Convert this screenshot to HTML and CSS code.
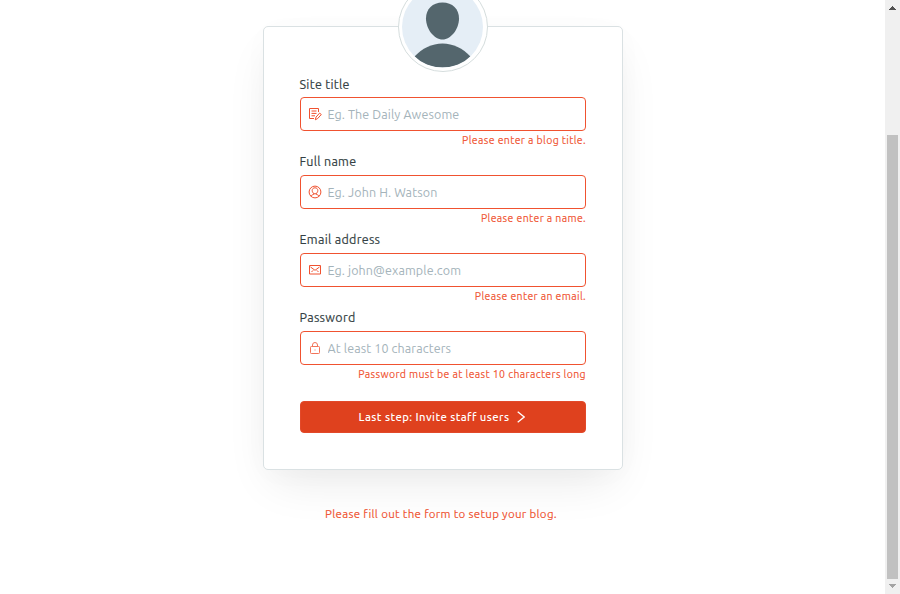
FILE: index.html
```html
<!DOCTYPE html>
<html lang="en">
<head>
<meta charset="utf-8">
<title>Setup</title>
<link rel="stylesheet" href="styles.css">
</head>
<body>
<main class="page">
  <form class="card">
    <div class="avatar">
      <svg viewBox="0 0 90 90" width="90" height="90">
        <circle cx="45" cy="45" r="44.5" fill="#fff" stroke="#d5dddd"/>
        <clipPath id="disc"><circle cx="44.5" cy="45" r="40.5"/></clipPath>
        <g clip-path="url(#disc)">
          <path fill="#e5eef6" d="M0 0h90v90H0z"/>
          <path fill="#54666d" d="M44.500 20.500C54.500 20.500 61 27 61 36.500C61 47 53 57.500 44.500 57.500S28 47 28 36.500C28 27 34.500 20.500 44.500 20.500z"/>
          <path fill="#54666d" d="M16.500 74.500C24 66.500 34 61.500 44.500 61.500S65 66.500 72.500 74.500C66 82 56 85.500 44.500 85.500S23 82 16.500 74.500z"/>
        </g>
      </svg>
    </div>
    <div class="group">
      <label class="label first" for="title">Site title</label>
      <div class="field">
        <svg class="icon" viewBox="0 0 14 14"><path d="M10.500 5V1.500H1.500V11.500H6M3.500 4h5M3.500 6.400h5M3.500 8.800h3.500M7.300 12.800l.7-2.700 3.600-4 1.700 1.400-3.600 4z"/></svg>
        <input class="input" id="title" type="text" placeholder="Eg. The Daily Awesome">
      </div>
      <p class="error">Please enter a blog title.</p>
    </div>
    <div class="group">
      <label class="label" for="name">Full name</label>
      <div class="field">
        <svg class="icon" viewBox="0 0 14 14"><circle cx="7" cy="7" r="5.900"/><path d="M7 2.800c1.800 0 2.800 1.100 2.800 2.700S8.700 8.900 7 8.900 4.200 7.100 4.200 5.500 5.200 2.800 7 2.800zM3 11.300c.3-1.200 1.400-1.500 2.700-1.900V8.500M11 11.300c-.3-1.200-1.400-1.500-2.700-1.900V8.500"/></svg>
        <input class="input" id="name" type="text" placeholder="Eg. John H. Watson">
      </div>
      <p class="error">Please enter a name.</p>
    </div>
    <div class="group">
      <label class="label" for="email">Email address</label>
      <div class="field">
        <svg class="icon" viewBox="0 0 14 14"><path d="M1.500 2.500h11v8.500h-11zM2.500 4L7 7.300 11.500 4M3.500 9l1.700-1.700M10.500 9L8.800 7.300"/></svg>
        <input class="input" id="email" type="text" placeholder="Eg. john@example.com">
      </div>
      <p class="error">Please enter an email.</p>
    </div>
    <div class="group">
      <label class="label" for="password">Password</label>
      <div class="field">
        <svg class="icon light" viewBox="0 0 14 14"><rect x="2.500" y="5.500" width="9" height="7" rx=".8"/><path d="M4.500 5.500V4a2.500 2.500 0 0 1 5 0v1.500M7 8.500v1"/></svg>
        <input class="input" id="password" type="password" placeholder="At least 10 characters">
      </div>
      <p class="error">Password must be at least 10 characters long</p>
    </div>
    <button class="button" type="button">
      <span class="button-text">Last step: Invite staff users</span>
      <svg class="chevron" viewBox="0 0 8 12"><path d="M.7.700L7.200 6 .7 11.300"/></svg>
    </button>
  </form>
  <p class="notice">Please fill out the form to setup your blog.</p>
</main>
<aside class="scrollbar">
  <svg class="arrow" viewBox="0 0 7 4"><path fill="#505050" d="M3 0h1v1h1v1h1v1h1v1H0V3h1V2h1V1h1z"/></svg>
  <div class="thumb"></div>
  <svg class="arrow" viewBox="0 0 7 4"><path fill="#a3a3a3" d="M3 4h1V3h1V2h1V1h1V0H0v1h1v1h1v1h1z"/></svg>
</aside>
</body>
</html>
```

FILE: styles.css
```css
* { box-sizing: border-box; }
body {
  margin: 0;
  height: 594px;
  display: flex;
  overflow: hidden;
  background: #fff;
  color: #343f44;
  font-family: Ubuntu, "Noto Sans", "Open Sans", sans-serif;
}
p { margin: 0; }
.page {
  flex: 1;
  display: flex;
  flex-direction: column;
  align-items: center;
  padding-top: 26px;
}
.card {
  position: relative;
  width: 360px;
  height: 444px;
  margin-left: 1px;
  padding: 48px 36px 0;
  border: 1px solid #dae1e3;
  border-radius: 5px;
  background: #fff;
  box-shadow: 0 20px 45px -10px rgba(0, 0, 0, .09), 0 4px 30px rgba(0, 0, 0, .02);
}
.avatar {
  position: absolute;
  left: 134px;
  top: -45px;
  width: 90px;
  height: 90px;
}
.avatar svg, .icon, .arrow { display: block; }
.group { height: 78px; }
.label {
  display: block;
  width: max-content;
  height: 22px;
  margin-left: -.5px;
  line-height: 16px;
  font-size: 12.5px;
  letter-spacing: .3px;
  white-space: nowrap;
  -webkit-text-stroke: .15px currentColor;
}
.label.first { line-height: 18px; }
.field {
  display: flex;
  align-items: center;
  gap: 5.5px;
  height: 34px;
  padding-left: 7px;
  border: 1px solid #f05230;
  border-radius: 4px;
}
.icon {
  width: 14px;
  height: 14px;
  fill: none;
  stroke: #f05230;
  stroke-width: 1;
}
.icon.light { opacity: .8; }
.input {
  flex: 1;
  min-width: 0;
  padding: 0;
  border: 0;
  outline: 0;
  background: none;
  font: 12.5px Ubuntu, "Noto Sans", "Open Sans", sans-serif;
  letter-spacing: .12px;
}
.input::placeholder { color: #a4b3ba; opacity: 1; }
.error {
  width: max-content;
  margin: 1px 0 0 auto;
  line-height: 17px;
  font-size: 10.5px;
  letter-spacing: .37px;
  color: #f05230;
  white-space: nowrap;
  -webkit-text-stroke: .12px currentColor;
}
.button {
  display: flex;
  align-items: center;
  justify-content: center;
  gap: 8px;
  width: 286px;
  height: 32px;
  margin-top: 14px;
  padding: 0 2px 0 0;
  border: 1px solid #e2492a;
  border-radius: 4px;
  background: #df411e;
  color: #fff;
  font: 500 11.3px Ubuntu, "Noto Sans", "Open Sans", sans-serif;
  letter-spacing: .42px;
}
.button-text { padding-bottom: 2px; }
.chevron {
  width: 8px;
  height: 12px;
  fill: none;
  stroke: #fff;
  stroke-width: 1.3;
}
.notice {
  width: max-content;
  margin: 34px 3px 0 0;
  line-height: 20px;
  font-size: 11.5px;
  letter-spacing: .31px;
  color: #f05230;
  -webkit-text-stroke: .12px currentColor;
}
.scrollbar {
  display: flex;
  flex-direction: column;
  align-items: center;
  width: 15px;
  padding: 6px 0;
  background: #f0f0f0;
}
.arrow { width: 7px; height: 4px; }
.thumb {
  width: 11px;
  height: 444px;
  margin: 125px 0 5px;
  background: #c1c1c1;
}
```
